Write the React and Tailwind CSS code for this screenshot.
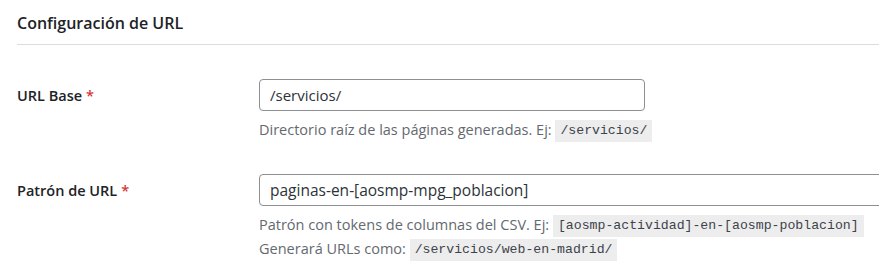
export default function App() {
  const codeCls =
    "inline-block h-[22px] leading-[22px] px-[5px] bg-[#ededed] text-[#3c434a] font-['Liberation_Mono',monospace] text-[13.2px] align-middle";
  return (
    <div className="w-[879px] h-[274px] overflow-hidden bg-white pl-[17px] text-[#1d2327] font-['Open_Sans','Noto_Sans',sans-serif]">
      <h2 className="h-[45px] pt-[10px] border-b border-[#dcdcde] text-[16px] leading-[26px] font-semibold text-[#1d2327]">
        Configuración de URL
      </h2>
      <div className="grid grid-cols-[242px_1fr] mt-[34px]">
        <div className="h-[32px] flex items-center pt-[2px] text-[14.5px] font-semibold">
          URL Base <span className="text-[#d63638] ml-[4px]">*</span>
        </div>
        <div>
          <div className="w-[386px] h-[32px] border border-[#8c8f94] rounded-[4px] flex items-center px-[10px] text-[15px] text-[#2c3338]">
            /servicios/
          </div>
          <p className="mt-[7px] leading-[24px] text-[14.5px] text-[#646970]">
            Directorio raíz de las páginas generadas. Ej:{" "}
            <code className={codeCls}>/servicios/</code>
          </p>
        </div>
      </div>
      <div className="grid grid-cols-[242px_1fr] mt-[32px]">
        <div className="h-[32px] flex items-center pt-[2px] text-[14.5px] font-semibold">
          Patrón de URL <span className="text-[#d63638] ml-[4px]">*</span>
        </div>
        <div>
          <div className="w-[720px] h-[32px] border border-[#8c8f94] rounded-[4px] flex items-center px-[10px] text-[15.5px] text-[#2c3338]">
            paginas-en-[aosmp-mpg_poblacion]
          </div>
          <div className="mt-[7px] leading-[24px] text-[14.5px] text-[#646970]">
            <p>
              Patrón con tokens de columnas del CSV. Ej:{" "}
              <code className={codeCls}>[aosmp-actividad]-en-[aosmp-poblacion]</code>
            </p>
            <p>
              Generará URLs como:{" "}
              <code className={codeCls}>/servicios/web-en-madrid/</code>
            </p>
          </div>
        </div>
      </div>
    </div>
  );
}
